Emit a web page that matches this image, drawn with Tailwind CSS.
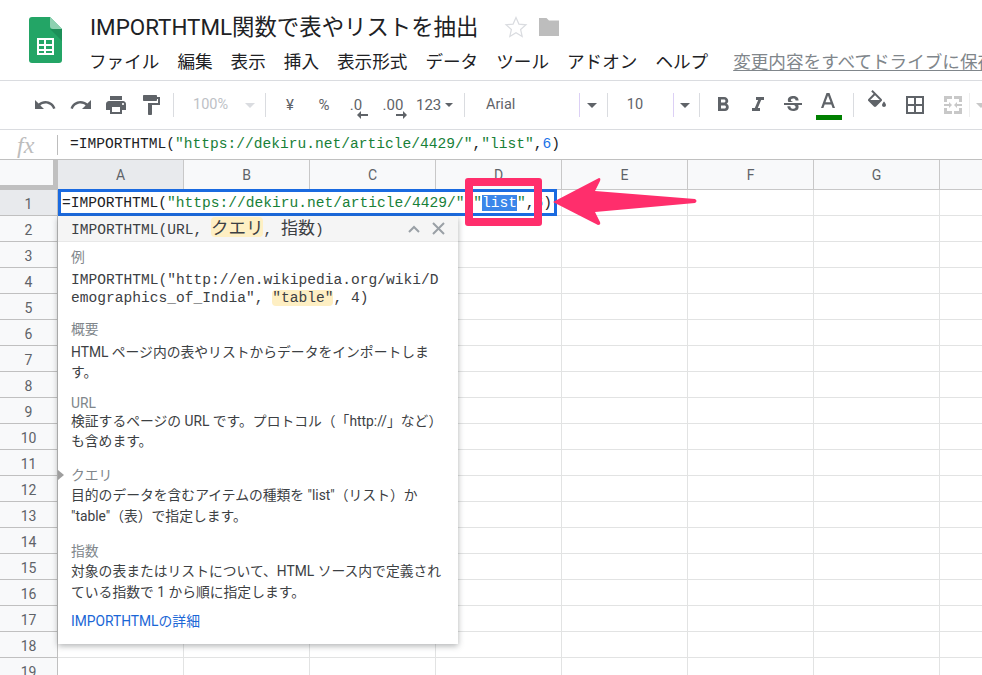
<!DOCTYPE html>
<html lang="ja">
<head>
    <meta charset="UTF-8">
    <title>IMPORTHTML関数で表やリストを抽出</title>
    <script src="https://cdn.jsdelivr.net/npm/@tailwindcss/browser@4"></script>
</head>
<body class="bg-white overflow-hidden font-['Roboto','Noto_Sans_CJK_JP',sans-serif]">
<div class="relative w-[982px] h-[675px] overflow-hidden flex flex-col text-[#202124]">

    <!-- title + menu -->
    <header class="h-[81px] shrink-0 flex border-b border-[#dadce0]">
        <svg class="ml-[29px] mt-[17px] w-[33px] h-[46px] shrink-0" viewBox="0 0 33 46">
            <path d="M3 0H21L33 12V43a3 3 0 0 1-3 3H3a3 3 0 0 1-3-3V3a3 3 0 0 1 3-3z" fill="#23a566"/>
            <path d="M21 12L33 24V12z" fill="#1c8f58"/>
            <path d="M21 0L33 12H24a3 3 0 0 1-3-3z" fill="#8ed1b1"/>
            <path d="M8 21H25V38H8zM10 23V27H15V23zM17 23V27H23V23zM10 29V32H15V29zM17 29V32H23V29zM10 34V36H15V34zM17 34V36H23V34z" fill="#fff" fill-rule="evenodd"/>
        </svg>
        <div class="ml-[28px] flex flex-col min-w-0">
            <div class="flex items-center h-[28px] mt-[13px]">
                <span class="text-[22.4px] leading-[28px] whitespace-nowrap">IMPORTHTML関数で表やリストを抽出</span>
                <svg class="ml-[26px] w-[24px] h-[24px]" viewBox="0 0 24 24" fill="none" stroke="#dadce0" stroke-width="1.2"><path d="M12 2.500l2.900 6.600 7.100.7-5.400 4.700 1.600 7-6.200-3.700-6.200 3.700 1.600-7L2 9.800l7.100-.7z"/></svg>
                <svg class="ml-[10px] w-[22px] h-[20px]" viewBox="0 0 22 20"><path d="M1 1H8.500L11 3.500H21V19H1z" fill="#bdbdbd"/></svg>
            </div>
            <nav class="flex items-center gap-[18px] h-[30px] mt-[6px] -ml-[1px] text-[17.6px] whitespace-nowrap [&>*]:shrink-0">
                <span>ファイル</span><span>編集</span><span>表示</span><span>挿入</span><span>表示形式</span><span>データ</span><span>ツール</span><span>アドオン</span><span>ヘルプ</span>
                <span class="ml-[7px] text-[#80868b] underline underline-offset-2">変更内容をすべてドライブに保存しました</span>
            </nav>
        </div>
    </header>

    <!-- toolbar -->
    <div class="h-[49px] shrink-0 flex items-center pl-[27px] border-b border-[#dadce0] text-[#5f6368] text-[14px] whitespace-nowrap [&>*]:shrink-0">
        <span class="w-[36px] flex justify-center"><svg class="w-[24px] h-[24px]" viewBox="0 0 24 24" fill="#5f6368"><path d="M12.500 8c-2.650 0-5.050.99-6.900 2.600L2 7v9h9l-3.620-3.620c1.390-1.160 3.160-1.880 5.120-1.880 3.540 0 6.550 2.310 7.600 5.500l2.370-.78C21.080 11.030 17.150 8 12.500 8z"/></svg></span>
        <span class="w-[36px] flex justify-center"><svg class="w-[24px] h-[24px]" viewBox="0 0 24 24" fill="#5f6368"><path d="M18.400 10.600C16.550 8.990 14.150 8 11.500 8c-4.650 0-8.580 3.030-9.960 7.220L3.900 16c1.050-3.190 4.050-5.500 7.600-5.500 1.950 0 3.730.72 5.120 1.880L13 16h9V7l-3.600 3.600z"/></svg></span>
        <span class="w-[34px] flex justify-center"><svg class="w-[24px] h-[24px]" viewBox="0 0 24 24" fill="#5f6368"><path d="M19 8H5c-1.660 0-3 1.340-3 3v6h4v4h12v-4h4v-6c0-1.660-1.340-3-3-3zm-3 11H8v-5h8v5zm3-7c-.55 0-1-.45-1-1s.45-1 1-1 1 .45 1 1-.45 1-1 1zm-1-9H6v4h12V3z"/></svg></span>
        <span class="w-[36px] flex justify-center"><svg class="w-[24px] h-[24px]" viewBox="0 0 24 24" fill="#5f6368"><path d="M18 4V3c0-.55-.45-1-1-1H5c-.55 0-1 .45-1 1v4c0 .55.45 1 1 1h12c.55 0 1-.45 1-1V6h1v4H9v11c0 .55.45 1 1 1h2c.55 0 1-.45 1-1v-9h8V4h-3z"/></svg></span>
        <span class="ml-[4px] w-px h-[24px] bg-[#dadce0]"></span>
        <span class="ml-[19px] w-[36px] text-[#bdc1c6] text-[14.5px]">100%</span>
        <span class="ml-[16px] border-x-[5px] border-t-[5px] border-x-transparent border-t-[#dadce0]"></span>
        <span class="ml-[10px] w-px h-[24px] bg-[#dadce0]"></span>
        <span class="w-[48px] text-center text-[15px]">¥</span>
        <span class="w-[20px] text-center text-[15px]">%</span>
        <span class="relative w-[44px] text-center text-[15px]">.0<svg class="absolute left-[23px] top-[17px] w-[12px] h-[8px]" viewBox="0 0 12 8" fill="#5f6368"><path d="M0 4L4 0V3H11V5H4V8z"/></svg></span>
        <span class="relative ml-[3px] w-[24px] text-center text-[15px]">.00<svg class="absolute left-[14px] top-[17px] w-[12px] h-[8px]" viewBox="0 0 12 8" fill="#5f6368"><path d="M12 4L8 0V3H1V5H8V8z"/></svg></span>
        <span class="ml-[11px] w-[25px] text-[15px]">123</span>
        <span class="ml-[4px] border-x-[4px] border-t-[4px] border-x-transparent border-t-[#5f6368]"></span>
        <span class="ml-[11px] w-px h-[24px] bg-[#dadce0]"></span>
        <span class="ml-[21px] w-[93px] text-[14.5px]">Arial</span>
        <span class="w-px h-[24px] bg-[#dcd0f5]"></span>
        <span class="ml-[7px] border-x-[5px] border-t-[5px] border-x-transparent border-t-[#5f6368]"></span>
        <span class="ml-[10px] w-px h-[24px] bg-[#dadce0]"></span>
        <span class="w-[65px] pr-[11px] text-center text-[14.5px]">10</span>
        <span class="w-px h-[24px] bg-[#dcd0f5]"></span>
        <span class="ml-[6px] border-x-[5px] border-t-[5px] border-x-transparent border-t-[#5f6368]"></span>
        <span class="ml-[9px] w-px h-[24px] bg-[#dadce0]"></span>
        <span class="ml-[5px] w-[35px] flex justify-center"><svg class="w-[24px] h-[24px]" viewBox="0 0 24 24" fill="#5f6368"><path d="M15.600 10.790c.97-.67 1.650-1.770 1.650-2.790 0-2.260-1.750-4-4-4H7v14h7.040c2.090 0 3.710-1.700 3.710-3.790 0-1.520-.86-2.820-2.150-3.420zM10 6.500h3c.83 0 1.500.67 1.500 1.500s-.67 1.500-1.500 1.500h-3v-3zm3.500 9H10v-3h3.500c.83 0 1.500.67 1.500 1.500s-.67 1.500-1.500 1.500z"/></svg></span>
        <span class="w-[35px] flex justify-center"><svg class="w-[24px] h-[24px]" viewBox="0 0 24 24" fill="#5f6368"><path d="M10 4v3h2.210l-3.420 8H6v3h8v-3h-2.210l3.420-8H18V4z"/></svg></span>
        <span class="w-[36px] flex justify-center"><svg class="w-[24px] h-[24px]" viewBox="0 0 24 24" fill="#5f6368"><path d="M6.850 7.080C6.850 4.370 9.450 3 12.240 3c1.640 0 3 .49 3.900 1.280.77.65 1.460 1.730 1.460 3.240h-3.010c0-.31-.05-.59-.15-.85-.29-.86-1.200-1.280-2.250-1.280-1.860 0-2.340 1.020-2.340 1.700 0 .48.25.88.74 1.210.38.25.77.48 1.410.7H7.390c-.21-.34-.54-.89-.54-1.920zM21 12v-2H3v2h9.620c1.150.45 1.960.75 1.960 1.970 0 1-.81 1.670-2.280 1.670-1.540 0-2.930-.54-2.930-2.510H6.400c0 .55.08 1.130.24 1.580.81 2.290 3.290 3.300 5.670 3.300 2.270 0 5.300-.89 5.300-4.050 0-.3-.01-1.160-.48-1.960H21z"/></svg></span>
        <span class="relative w-[34px] flex justify-center">
            <svg class="w-[24px] h-[24px] -mt-[6px]" viewBox="0 0 24 24" fill="#5f6368"><path d="M10.500 3L5 18h2.400l1.300-3.600h6.600l1.300 3.600H19L13.500 3zM9.500 12.300L12 5.600l2.500 6.700z"/></svg>
            <span class="absolute left-[5px] top-[19px] w-[26px] h-[5px] bg-[#008000]"></span>
        </span>
        <span class="ml-[8px] w-px h-[24px] bg-[#dadce0]"></span>
        <span class="ml-[11px] w-[24px] flex justify-center"><svg class="w-[24px] h-[24px] -mt-[6px]" viewBox="0 0 24 24" fill="#5f6368"><path d="M16.560 8.940L7.620 0 6.210 1.410l2.380 2.380-5.150 5.150c-.59.59-.59 1.540 0 2.120l5.500 5.500c.29.29.68.44 1.060.44s.77-.15 1.060-.44l5.500-5.500c.59-.58.59-1.530 0-2.120zM5.210 10L10 5.210 14.790 10H5.210zM19 11.500s-2 2.170-2 3.500c0 1.100.9 2 2 2s2-.9 2-2c0-1.330-2-3.500-2-3.500z"/></svg></span>
        <span class="ml-[14px] w-[24px] flex justify-center"><svg class="w-[24px] h-[24px]" viewBox="0 0 24 24" fill="#5f6368"><path d="M3 3v18h18V3H3zm8 16H5v-6h6v6zm0-8H5V5h6v6zm8 8h-6v-6h6v6zm0-8h-6V5h6v6z"/></svg></span>
        <span class="ml-[14px] w-[24px] flex justify-center"><svg class="w-[24px] h-[24px]" viewBox="0 0 24 24" fill="#c8c8c8"><path d="M3 3h8v3H6v3H3zM13 3h8v6h-3V6h-5zM3 15h3v3h5v3H3zM18 15h3v6h-8v-3h5zM3 11h5V9l3 3-3 3v-2H3zM21 11h-5V9l-3 3 3 3v-2h5z"/></svg></span>
        <span class="ml-[4px] w-px h-[24px] bg-[#eee]"></span>
        <span class="ml-[6px] border-x-[5px] border-t-[5px] border-x-transparent border-t-[#c8c8c8]"></span>
    </div>

    <!-- formula bar -->
    <div class="h-[29px] shrink-0 flex items-center font-['Liberation_Mono',monospace] text-[14.58px] text-[#202124] whitespace-nowrap">
        <span class="w-[57px] pl-[17px] font-['Liberation_Serif',serif] italic text-[24px] text-[#bdbdbd]">fx</span>
        <span class="w-px h-[20px] bg-[#bdbdbd]"></span>
        <span class="ml-[12px]">=IMPORTHTML(<span class="text-[#188038]">"https://dekiru.net/article/4429/"</span>,<span class="text-[#188038]">"list"</span>,<span class="text-[#1a73e8]">6</span>)</span>
    </div>

    <!-- grid, filled in by the script below -->
    <div id="sheet" class="flex-1 min-h-0 border-t border-[#c0c0c0] text-[14px] text-[#5f6368]"></div>

    <!-- cell editor -->
    <div class="absolute left-[58px] top-[189px] w-[499px] h-[27px] pt-[2px] bg-white border-[3px] border-[#1a6ae0] flex items-center pl-[1px] font-['Liberation_Mono',monospace] text-[14.58px] whitespace-nowrap">
        <span>=IMPORTHTML(<span class="text-[#188038]">"https://dekiru.net/article/4429/"</span>,<span class="text-[#188038]">"<span class="bg-[#3b86ea] text-white">list</span>"</span>,<span class="text-[#1a73e8]">6</span>)</span>
    </div>

    <!-- function help -->
    <div class="absolute left-[58px] top-[216px] w-[400px] h-[428px] bg-white shadow-[0_2px_6px_rgba(60,64,67,0.4)] text-[13.8px] leading-[20px] text-[#3c4043] whitespace-nowrap [text-spacing-trim:space-all]">
        <div class="h-[26px] bg-[#f5f5f5] border-b border-[#e8e8e8] flex items-center pl-[13px] font-['Liberation_Mono',monospace] text-[14.58px]">
            <span>IMPORTHTML(URL, <span class="inline-block leading-[20px] bg-[#feefc3] rounded-[4px] font-['Noto_Sans_CJK_JP',sans-serif] text-[17.5px]">クエリ</span>, <span class="inline-block leading-[20px] font-['Noto_Sans_CJK_JP',sans-serif] text-[17px]">指数</span>)</span>
            <svg class="absolute left-[350px] top-[7px] w-[12px] h-[12px]" viewBox="0 0 12 12" fill="none" stroke="#9aa0a6" stroke-width="2"><path d="M1 9L6 4L11 9"/></svg>
            <svg class="absolute left-[374px] top-[6px] w-[13px] h-[13px]" viewBox="0 0 13 13" fill="none" stroke="#9aa0a6" stroke-width="2"><path d="M1 1L12 12M12 1L1 12"/></svg>
        </div>
        <div class="pl-[13px]">
            <div class="mt-[5px] text-[#80868b]">例</div>
            <div class="mt-[4px] font-['Liberation_Mono',monospace] text-[14.58px] leading-[18px]">IMPORTHTML("http://en.wikipedia.org/wiki/D<br>emographics_of_India", <span class="bg-[#feefc3] rounded-[4px]">"table"</span>, 4)</div>
            <div class="mt-[12px] text-[#80868b]">概要</div>
            <div class="mt-[3px] leading-[20px]">HTML ページ内の表やリストからデータをインポートしま<br>す。</div>
            <div class="mt-[12px] text-[#80868b] leading-[18px]">URL</div>
            <div class="-mt-[1px] leading-[20px]">検証するページの URL です。プロトコル（「http://」など）<br>も含めます。</div>
            <div class="relative mt-[14px] text-[#80868b]">クエリ<span class="absolute -left-[13px] top-[5px] border-y-[5px] border-l-[6px] border-y-transparent border-l-[#9e9e9e]"></span></div>
            <div class="leading-[21px]">目的のデータを含むアイテムの種類を "list"（リスト）か<br>"table"（表）で指定します。</div>
            <div class="mt-[14px] text-[#80868b]">指数</div>
            <div class="leading-[21px]">対象の表またはリストについて、HTML ソース内で定義され<br>ている指数で 1 から順に指定します。</div>
            <div class="mt-[8px] text-[#1a66d6]">IMPORTHTMLの詳細</div>
        </div>
    </div>

    <!-- annotation drawn over the screenshot -->
    <div class="absolute left-[465px] top-[178px] w-[77px] h-[48px] border-[8px] border-[#ff2e6c] rounded-[3px]"></div>
    <svg class="absolute left-[550px] top-[175px] w-[150px] h-[54px]" viewBox="0 0 150 54"><path d="M3 27L49 3Q51 3 50 6L45 16L145 24Q148 26 145 28L45 37L50 47Q51 50 48 50z" fill="#ff2e6c"/></svg>
</div>

<script>
    const colClass = 'w-[126px] shrink-0 flex items-center justify-center pt-[2px] border-r border-[#c8c8c8]';
    const cellClass = 'w-[126px] shrink-0 border-r border-[#e2e3e3]';
    const sheet = document.getElementById('sheet');

    let html = '<div class="h-[30px] flex bg-[#f8f9fa]">'
        + '<div class="w-[58px] shrink-0 border-r-[5px] border-b-[5px] border-[#c0c0c0]"></div>';
    ['A', 'B', 'C', 'D', 'E', 'F', 'G', 'H'].forEach((col, i) => {
        html += `<div class="${colClass} ${i === 0 ? 'bg-[#e8eaed]' : ''} border-b border-[#c0c0c0]">${col}</div>`;
    });
    html += '</div>';

    for (let row = 1; row <= 19; row++) {
        const rowBg = row === 1 ? 'bg-[#e8eaed]' : 'bg-[#f8f9fa]';
        html += `<div class="h-[26px] flex"><div class="w-[58px] shrink-0 flex items-center justify-center pt-[3px] ${rowBg} border-r border-b border-[#c0c0c0]">${row}</div>`;
        for (let c = 0; c < 8; c++) {
            html += `<div class="${cellClass} border-b"></div>`;
        }
        html += '</div>';
    }
    sheet.innerHTML = html;
</script>
</body>
</html>
